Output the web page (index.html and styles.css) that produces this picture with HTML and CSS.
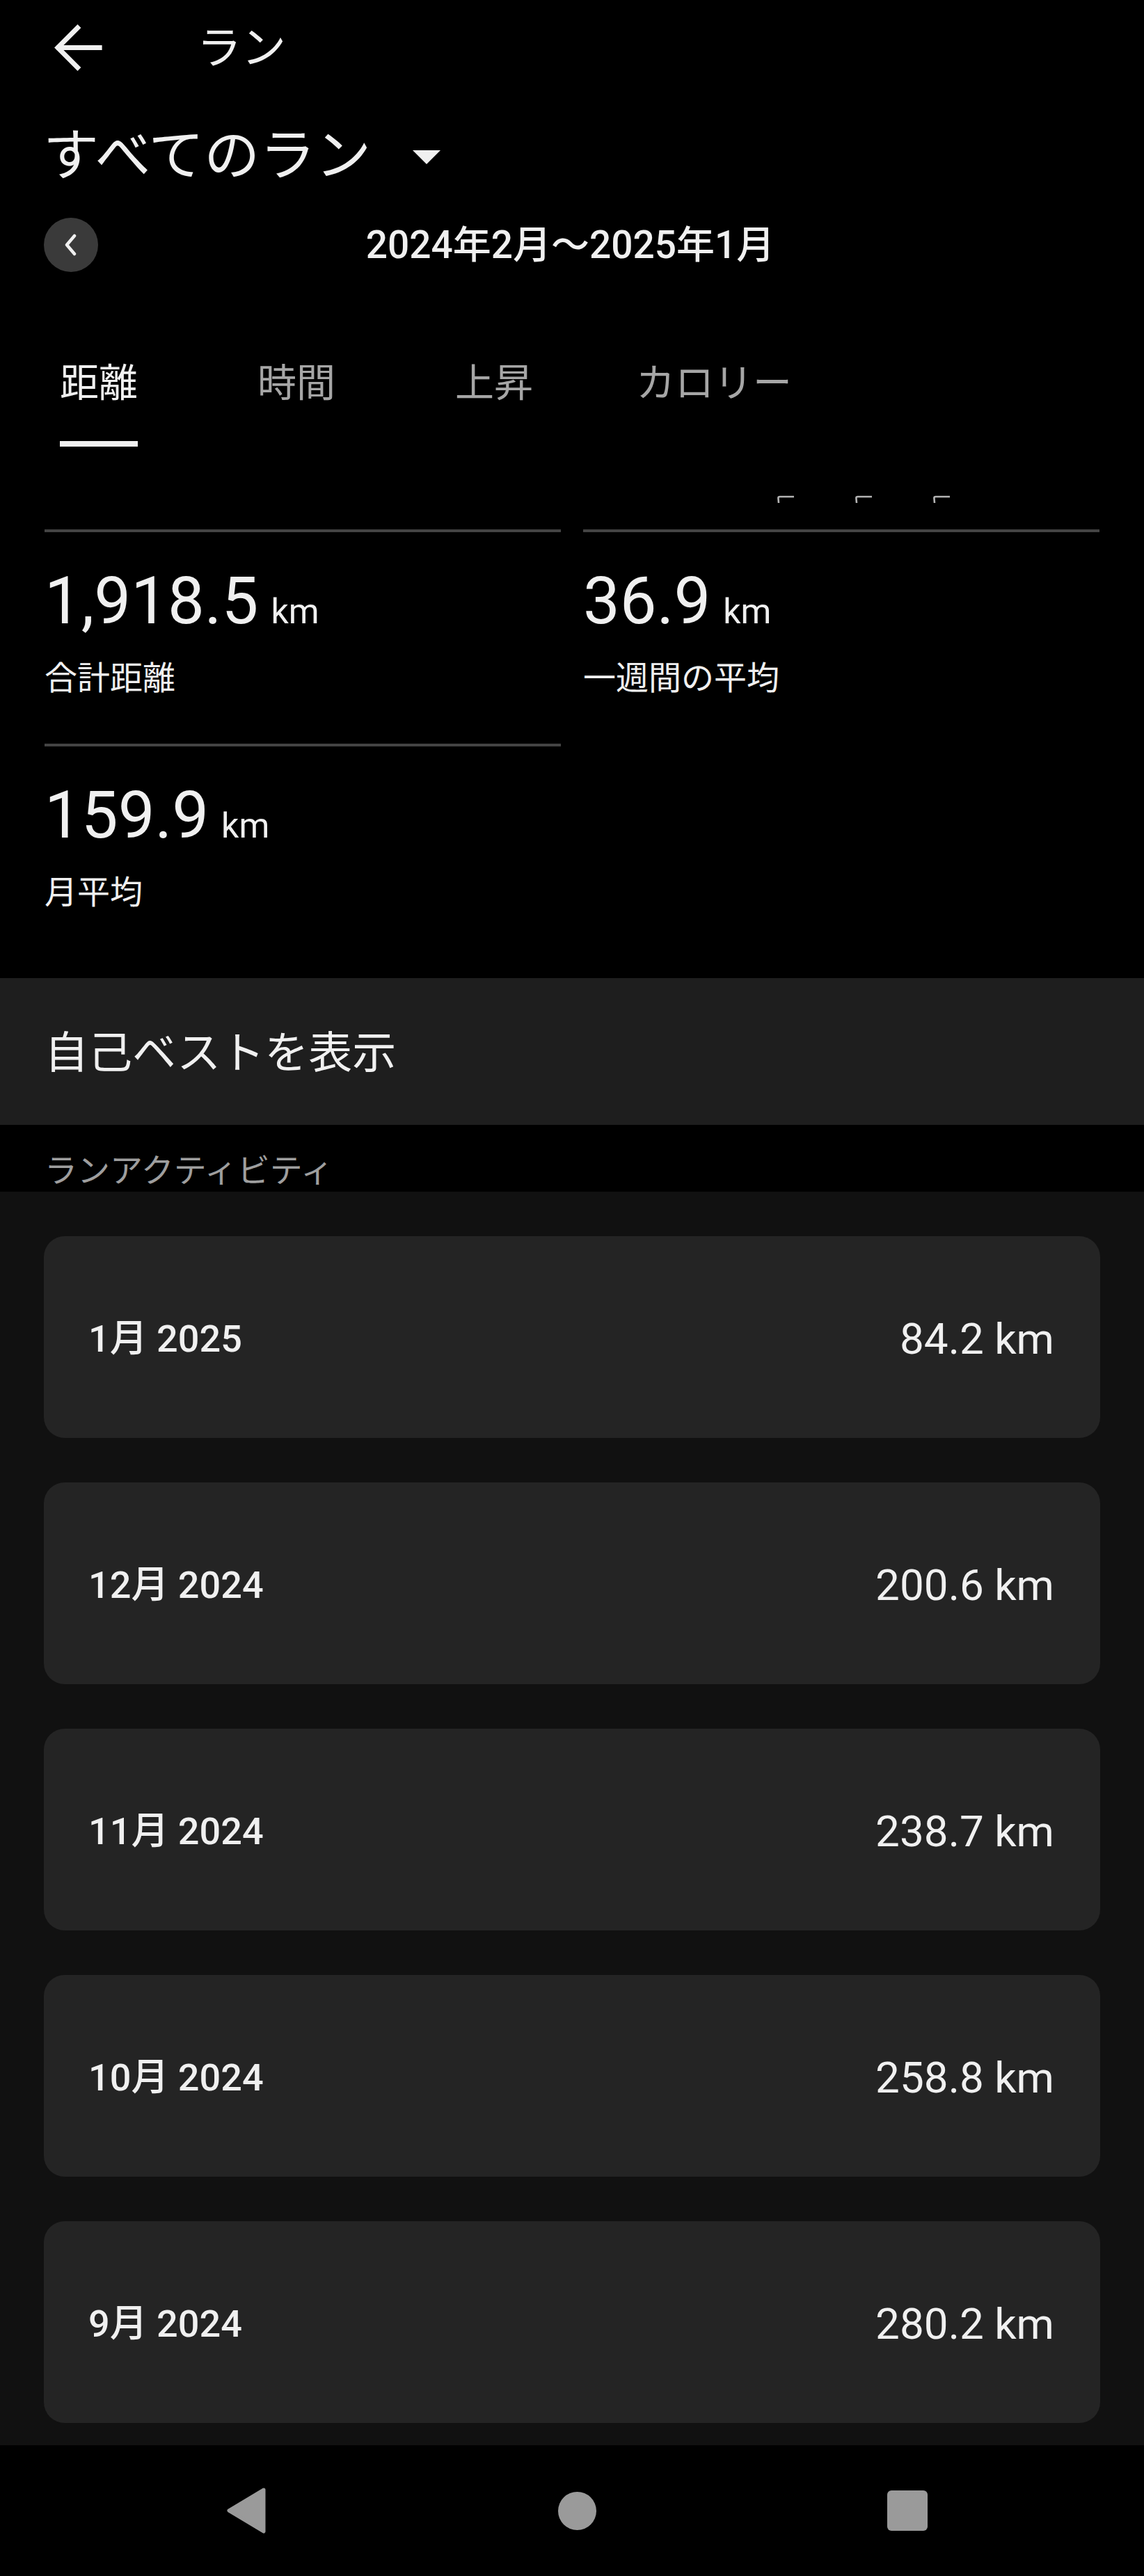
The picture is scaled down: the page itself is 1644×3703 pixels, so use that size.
FILE: index.html
```html
<!DOCTYPE html>
<html lang="ja">
<head>
<meta charset="utf-8">
<title>ラン</title>
<link rel="stylesheet" href="styles.css">
</head>
<body>
<div class="screen">
  <header class="appbar">
    <svg class="back-icon" viewBox="0 0 24 24" width="95" height="95" aria-hidden="true">
      <path d="M20 12H5.2M12 4.8 4.8 12l7.2 7.2" fill="none" stroke="#f0f0f0" stroke-width="1.75" stroke-linecap="square"/>
    </svg>
    <span class="appbar-title">ラン</span>
  </header>

  <div class="heading-row">
    <h1 class="heading">すべてのラン</h1>
    <svg class="drop-icon" viewBox="0 0 40 20" width="40" height="20" aria-hidden="true">
      <path d="M0 0H40L20 20Z" fill="#f0f0f0"/>
    </svg>
  </div>

  <div class="date-row">
    <button class="prev-btn" aria-label="前へ">
      <svg viewBox="0 0 20 32" width="20" height="32" aria-hidden="true">
        <path d="M16 3 5 16l11 13" fill="none" stroke="#f0f0f0" stroke-width="4.5" stroke-linecap="round" stroke-linejoin="round"/>
      </svg>
    </button>
    <div class="date-range">2024年2月～2025年1月</div>
    <span class="date-spacer"></span>
  </div>

  <nav class="tabs">
    <div class="tab active"><span class="tab-label">距離</span><i class="tab-ind"></i></div>
    <div class="tab"><span class="tab-label">時間</span><i class="tab-ind"></i></div>
    <div class="tab"><span class="tab-label">上昇</span><i class="tab-ind"></i></div>
    <div class="tab tab-last"><span class="tab-label">カロリー</span><i class="tab-ind"></i></div>
  </nav>

  <div class="ticks" aria-hidden="true">
    <svg viewBox="0 0 26 12" width="26" height="12"><path d="M3 11 2.4 4Q2.4 2 4.5 2H25" fill="none" stroke="#b4b4b4" stroke-width="2.6"/></svg>
    <svg viewBox="0 0 26 12" width="26" height="12"><path d="M3 11 2.4 4Q2.4 2 4.5 2H25" fill="none" stroke="#b4b4b4" stroke-width="2.6"/></svg>
    <svg viewBox="0 0 26 12" width="26" height="12"><path d="M3 11 2.4 4Q2.4 2 4.5 2H25" fill="none" stroke="#b4b4b4" stroke-width="2.6"/></svg>
  </div>

  <section class="stats">
    <div class="stat">
      <div class="stat-value">1,918.5<span class="unit">km</span></div>
      <div class="stat-label">合計距離</div>
    </div>
    <div class="stat">
      <div class="stat-value">36.9<span class="unit">km</span></div>
      <div class="stat-label">一週間の平均</div>
    </div>
    <div class="stat">
      <div class="stat-value">159.9<span class="unit">km</span></div>
      <div class="stat-label">月平均</div>
    </div>
  </section>

  <div class="pr-band">自己ベストを表示</div>

  <div class="section-label">ランアクティビティ</div>

  <div class="month-list">
    <div class="month-card"><span class="month-name">1月 2025</span><span class="month-dist">84.2 km</span></div>
    <div class="month-card"><span class="month-name">12月 2024</span><span class="month-dist">200.6 km</span></div>
    <div class="month-card"><span class="month-name">11月 2024</span><span class="month-dist">238.7 km</span></div>
    <div class="month-card"><span class="month-name">10月 2024</span><span class="month-dist">258.8 km</span></div>
    <div class="month-card"><span class="month-name">9月 2024</span><span class="month-dist">280.2 km</span></div>
  </div>

  <footer class="sysnav">
    <svg class="nav-back" viewBox="0 0 60 68" width="60" height="68" aria-hidden="true">
      <path d="M55 4 5 34l50 30Z" fill="#9a9a9a" stroke="#9a9a9a" stroke-width="5" stroke-linejoin="round"/>
    </svg>
    <span class="nav-home"></span>
    <span class="nav-recent"></span>
  </footer>
</div>
</body>
</html>
```

FILE: styles.css
```css
* {
  box-sizing: border-box;
}

html, body {
  margin: 0;
  padding: 0;
  background: #000;
}

body {
  font-family: "Roboto", "Noto Sans CJK JP", sans-serif;
  color: #f0f0f0;
}

.screen {
  width: 1644px;
  height: 3703px;
  background: #000;
  display: flex;
  flex-direction: column;
  overflow: hidden;
}

/* App bar */
.appbar {
  height: 136px;
  display: flex;
  align-items: center;
  padding-left: 64px;
  flex-shrink: 0;
}

.back-icon {
  display: block;
  flex-shrink: 0;
}

.appbar-title {
  margin-left: 124px;
  font-size: 64px;
  line-height: 1;
  font-weight: 400;
  padding-top: 4px;
}

/* Heading */
.heading-row {
  margin-top: 32px;
  height: 112px;
  display: flex;
  align-items: center;
  padding-left: 62px;
  flex-shrink: 0;
}

.heading {
  margin: 0;
  font-size: 80px;
  line-height: 112px;
  font-weight: 400;
}

.drop-icon {
  display: block;
  margin-left: 60px;
  margin-top: 4px;
}

/* Date row */
.date-row {
  margin-top: 33px;
  height: 78px;
  display: grid;
  grid-template-columns: 78px 1fr 78px;
  align-items: center;
  padding: 0 64px 0 63px;
  flex-shrink: 0;
}

.prev-btn {
  width: 78px;
  height: 78px;
  border-radius: 50%;
  border: 0;
  padding: 0;
  background: #3a3a3a;
  display: flex;
  align-items: center;
  justify-content: center;
}

.prev-btn svg {
  display: block;
  margin-left: -2px;
}

.date-range {
  text-align: center;
  font-size: 55px;
  line-height: 78px;
  font-weight: 500;
  padding-right: 4px;
}

/* Tabs */
.tabs {
  margin-top: 126px;
  display: flex;
  gap: 172px;
  padding-left: 86px;
  flex-shrink: 0;
}

.tab {
  display: inline-flex;
  flex-direction: column;
  align-items: stretch;
}

.tab-last {
  margin-left: -24px;
}

.tab-label {
  font-size: 56px;
  line-height: 68px;
  color: #a6a6a6;
  white-space: nowrap;
}

.tab-ind {
  display: block;
  height: 8px;
  margin-top: 49px;
  background: transparent;
}

.tab.active .tab-label {
  color: #f0f0f0;
}

.tab.active .tab-ind {
  background: #f0f0f0;
}

/* chart remnants */
.ticks {
  margin-top: 70px;
  height: 12px;
  display: flex;
  gap: 86px;
  padding-left: 1116px;
  flex-shrink: 0;
}

.ticks svg {
  display: block;
}

/* Stats */
.stats {
  margin-top: 37px;
  margin-bottom: 29px;
  padding: 0 64px;
  display: grid;
  grid-template-columns: 1fr 1fr;
  column-gap: 32px;
  flex-shrink: 0;
}

.stat {
  border-top: 4px solid #444444;
  padding-top: 44px;
  padding-bottom: 62px;
}

.stat-value {
  font-size: 94px;
  line-height: 110px;
  font-weight: 400;
  white-space: nowrap;
}

.unit {
  font-size: 50px;
  line-height: 1;
  margin-left: 18px;
}

.stat-label {
  margin-top: 24px;
  font-size: 47px;
  line-height: 64px;
}

/* Personal records band */
.pr-band {
  height: 211px;
  background: #1e1e1e;
  display: flex;
  align-items: center;
  padding: 4px 64px 0;
  font-size: 63px;
  line-height: 1.2;
  flex-shrink: 0;
}

.section-label {
  height: 96px;
  padding: 36px 64px 0;
  font-size: 47px;
  line-height: 60px;
  color: #9e9e9e;
  flex-shrink: 0;
}

/* Monthly list */
.month-list {
  background: #111111;
  padding: 64px 63px 32px;
  display: flex;
  flex-direction: column;
  gap: 64px;
  flex-shrink: 0;
}

.month-card {
  height: 290px;
  background: #242424;
  border-radius: 30px;
  display: flex;
  align-items: center;
  justify-content: space-between;
  padding: 6px 66px 0 64px;
}

.month-name {
  font-size: 54px;
  line-height: 1.2;
  font-weight: 500;
}

.month-dist {
  font-size: 62px;
  line-height: 1.2;
  font-weight: 400;
}

/* System navigation */
.sysnav {
  height: 188px;
  background: #000;
  display: flex;
  align-items: center;
  justify-content: center;
  gap: 418px;
  padding-left: 12px;
  flex-shrink: 0;
}

.nav-back {
  display: block;
}

.nav-home {
  width: 55px;
  height: 55px;
  border-radius: 50%;
  background: #9a9a9a;
}

.nav-recent {
  width: 58px;
  height: 58px;
  border-radius: 6px;
  background: #9a9a9a;
}
```
